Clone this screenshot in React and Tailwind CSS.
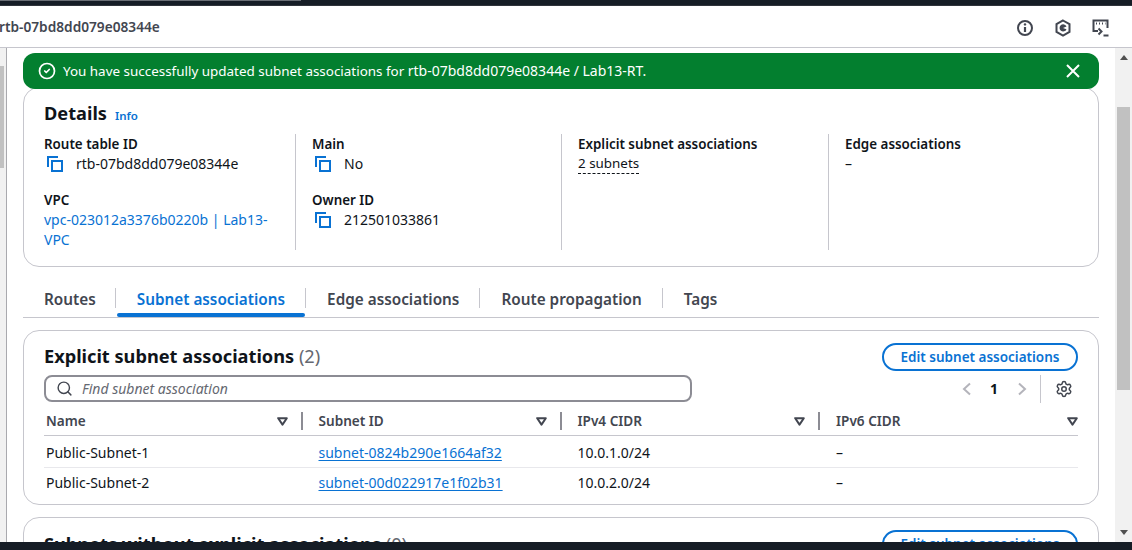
import React from 'react';
import { Search, Settings, CircleCheck } from 'lucide-react';

function CopyIcon() {
  return (
    <svg width="16" height="16" viewBox="0 0 16 16" fill="none" stroke="#0972d3" strokeWidth="2" className="shrink-0">
      <rect x="5" y="5" width="10" height="10" />
      <path d="M1 11V1h10" />
    </svg>
  );
}

function SortIcon() {
  return (
    <svg width="11" height="9" viewBox="0 0 11 9" fill="none" stroke="#424650" strokeWidth="2" strokeLinejoin="round" className="shrink-0">
      <path d="M1.2 1.2h8.6L5.5 7.6z" />
    </svg>
  );
}

function Chevron({ right }) {
  return (
    <svg width="10" height="14" viewBox="0 0 10 14" fill="none" stroke="#b4b4bb" strokeWidth="2" className="shrink-0">
      <path d={right ? 'M2 1.5L8 7l-6 5.5' : 'M8 1.5L2 7l6 5.5'} />
    </svg>
  );
}

function Label({ children }) {
  return <div className="text-[13.4px] font-semibold leading-5 text-[#0f141a]">{children}</div>;
}

function Copyable({ children }) {
  return (
    <div className="flex h-5 items-center gap-[13px] pl-[3px] text-sm text-[#0f141a]">
      <CopyIcon />
      <span>{children}</span>
    </div>
  );
}

function Details() {
  return (
    <section className="-mt-[2px] h-[180px] shrink-0 rounded-[16px] border border-[#c6c6cd] bg-white">
      <div className="flex h-[46px] items-baseline gap-2 pl-[20px] pt-[13px]">
        <h2 className="text-[18.2px] font-bold leading-6 text-[#0f141a]">Details</h2>
        <span className="text-[11.5px] font-semibold text-[#0972d3]">Info</span>
      </div>
      <div className="flex pl-[20px]">
        <div className="h-[116px] w-[252px] border-r border-[#c6c6cd]">
          <Label>Route table ID</Label>
          <Copyable>rtb-07bd8dd079e08344e</Copyable>
          <div className="mt-[16px]"><Label>VPC</Label></div>
          <div className="w-[240px] text-sm leading-5 text-[#0972d3]">vpc-023012a3376b0220b | Lab13-VPC</div>
        </div>
        <div className="h-[116px] w-[266px] border-r border-[#c6c6cd] pl-[16px]">
          <Label>Main</Label>
          <Copyable>No</Copyable>
          <div className="mt-[16px]"><Label>Owner ID</Label></div>
          <Copyable>212501033861</Copyable>
        </div>
        <div className="h-[116px] w-[267px] border-r border-[#c6c6cd] pl-[16px]">
          <Label>Explicit subnet associations</Label>
          <div className="w-fit border-b border-dashed border-[#0f141a] text-[13.4px] leading-[19px] text-[#0f141a]">2 subnets</div>
        </div>
        <div className="pl-[16px]">
          <Label>Edge associations</Label>
          <div className="text-sm leading-5 text-[#0f141a]">–</div>
        </div>
      </div>
    </section>
  );
}

function Tabs() {
  const tabs = ['Routes', 'Subnet associations', 'Edge associations', 'Route propagation', 'Tags'];
  return (
    <div className="mt-[18px] flex h-[33px] shrink-0 border-b border-[#c6c6cd]">
      {tabs.map((t, i) => (
        <div key={t} className={`relative flex h-[32px] items-start ${i === 0 ? 'pl-[21px] pr-[20px]' : 'px-[21px]'}`}>
          <span className={`text-[15.3px] font-semibold leading-[28px] ${i === 1 ? 'text-[#0972d3]' : 'text-[#424650]'}`}>{t}</span>
          {i < 4 && <span className="absolute right-0 top-[3px] h-5 w-px bg-[#c6c6cd]" />}
          {i === 1 && <span className="absolute inset-x-[1px] bottom-0 h-1 rounded-sm bg-[#0972d3]" />}
        </div>
      ))}
    </div>
  );
}

function TableHead({ label, first, last }) {
  return (
    <div className="flex h-[26px] w-full items-center justify-between">
      <span className={`text-[13.6px] font-semibold text-[#424650] ${first ? 'pl-[2px]' : ''}`}>{label}</span>
      <div className="flex items-center gap-[13px]">
        <SortIcon />
        {!last && <span className="h-[18px] w-[2px] bg-[#8c8c94]" />}
      </div>
    </div>
  );
}

function Row({ name, subnet, cidr, border }) {
  return (
    <div className={`flex h-[31px] items-center text-sm text-[#0f141a] ${border ? 'border-t border-[#e8e8ec]' : 'pt-[2px]'}`}>
      <div className="w-[258.5px] pl-[2px]">{name}</div>
      <div className="w-[259px] pl-[16px]"><a className="text-[#0972d3] underline underline-offset-2">{subnet}</a></div>
      <div className="w-[258.5px] pl-[16px]">{cidr}</div>
      <div className="pl-[16px]">–</div>
    </div>
  );
}

function Associations() {
  return (
    <section className="mt-[12px] h-[175px] shrink-0 rounded-[16px] border border-[#c6c6cd] bg-white px-[20px]">
      <div className="flex h-[42px] items-center justify-between pt-[10px]">
        <h2 className="-mt-[2px] text-[18.2px] font-bold leading-6 text-[#0f141a]">
          Explicit subnet associations <span className="font-normal text-[#656871]">(2)</span>
        </h2>
        <button className="h-[28px] w-[196px] rounded-full border-2 border-[#0972d3] text-[13.5px] font-semibold leading-4 text-[#0972d3]">
          Edit subnet associations
        </button>
      </div>
      <div className="mt-px flex h-[29px] items-center justify-between">
        <div className="flex h-[27px] w-[648px] items-center gap-[9px] rounded-lg border-2 border-[#8c8c94] pl-[10px]">
          <Search size={17} color="#424650" strokeWidth={2} />
          <span className="text-sm italic text-[#656871]">Find subnet association</span>
        </div>
        <div className="flex items-center pr-[5px]">
          <Chevron />
          <span className="ml-[18px] mr-[19px] w-2 text-sm font-bold text-[#0f141a]">1</span>
          <Chevron right />
          <span className="ml-[13px] mr-[14px] h-[28px] w-px bg-[#c6c6cd]" />
          <Settings size={18} color="#424650" strokeWidth={2} />
        </div>
      </div>
      <div className="mt-[5px] flex w-[1034px] border-b border-[#c6c6cd] pb-[1px]">
        <div className="w-[258.5px]"><TableHead label="Name" first /></div>
        <div className="w-[259px] pl-[16px]"><TableHead label="Subnet ID" /></div>
        <div className="w-[258.5px] pl-[16px]"><TableHead label="IPv4 CIDR" /></div>
        <div className="w-[258px] pl-[16px]"><TableHead label="IPv6 CIDR" last /></div>
      </div>
      <Row name="Public-Subnet-1" subnet="subnet-0824b290e1664af32" cidr="10.0.1.0/24" />
      <Row name="Public-Subnet-2" subnet="subnet-00d022917e1f02b31" cidr="10.0.2.0/24" border />
    </section>
  );
}

function Withouts() {
  return (
    <section className="mt-[12px] h-[60px] shrink-0 rounded-[16px] border border-[#c6c6cd] bg-white px-[20px]">
      <div className="flex h-[42px] items-center justify-between pt-[10px]">
        <h2 className="text-[18.2px] font-bold leading-6 text-[#0f141a]">
          Subnets without explicit associations <span className="font-normal text-[#656871]">(0)</span>
        </h2>
        <button className="h-[28px] w-[196px] rounded-full border-2 border-[#0972d3] text-[13.5px] font-semibold leading-4 text-[#0972d3]">
          Edit subnet associations
        </button>
      </div>
    </section>
  );
}

export default function App() {
  return (
    <div className="flex h-[550px] w-[1132px] flex-col overflow-hidden bg-white font-['Noto_Sans',sans-serif]">
      <div className="h-[6px] shrink-0 border-b border-[#30343b] bg-[#161d26]">
        <div className="h-px w-[301px] bg-[#6b6f76]" />
      </div>
      <header className="flex h-[42px] shrink-0 items-center justify-between border-b border-[#c6c6cd] bg-white pr-[22px]">
        <span className="-ml-[1px] pt-[2px] text-[13.7px] font-semibold text-[#424650]">rtb-07bd8dd079e08344e</span>
        <div className="flex items-center gap-[20px] pt-[2px]">
          <svg width="18" height="18" viewBox="0 0 18 18" fill="none" stroke="#424650" strokeWidth="2">
            <circle cx="9" cy="9" r="7" />
            <path d="M9 8v5" strokeWidth="2.2" />
            <circle cx="9" cy="5.4" r="1.2" fill="#424650" stroke="none" />
          </svg>
          <svg width="18" height="18" viewBox="0 0 18 18" fill="none" stroke="#424650" strokeWidth="2">
            <path d="M9 1.5l6.5 3.7v7.6L9 16.5l-6.5-3.7V5.2z" />
            <path d="M12.5 10.2A3.6 3.6 0 1 1 12.5 7.6L9 9z" fill="#424650" stroke="none" />
          </svg>
          <svg width="18" height="18" viewBox="0 0 18 18" fill="none" stroke="#424650" strokeWidth="2">
            <path d="M6 12H1.5V1.5h14V9" />
            <path d="M4 4.5h1M7 4.5h1M10 4.5h1M13 4.5h0.5" />
            <path d="M6.5 9.5l3 3-3 3M11.5 16.5h5" />
          </svg>
        </div>
      </header>
      <div className="flex min-h-0 flex-1">
        <div className="w-[7px] shrink-0 border-r border-[#a9a9ae] bg-[#f1f1f1]">
          <div className="mt-[18px] h-[102px] w-[4px] bg-[#c1c1c1]" />
        </div>
        <main className="flex min-w-0 flex-1 flex-col overflow-hidden px-[16px] pt-[5px]">
          <div className="relative z-10 flex h-[36px] shrink-0 items-center justify-between rounded-[12px] bg-[#037f2f] pl-[15px] pr-[19px] text-white">
            <div className="flex items-center gap-[7px]">
              <CircleCheck size={18} strokeWidth={2.3} />
              <span className="text-sm">
                <span className="text-[13.43px]">You have successfully updated subnet associations for </span>
                rtb-07bd8dd079e08344e / Lab13-RT.
              </span>
            </div>
            <svg width="14" height="14" viewBox="0 0 14 14" fill="none" stroke="#fff" strokeWidth="2">
              <path d="M1 1l12 12M13 1L1 13" />
            </svg>
          </div>
          <Details />
          <Tabs />
          <Associations />
          <Withouts />
        </main>
        <div className="flex w-[17px] shrink-0 flex-col items-center bg-[#f1f1f1]">
          <div className="mt-[7px] h-0 w-0 border-x-[4px] border-b-[5px] border-x-transparent border-b-[#505050]" />
          <div className="mt-[47px] h-[283px] w-[13px] bg-[#c1c1c1]" />
          <div className="mb-[7px] mt-auto h-0 w-0 border-x-[4px] border-t-[5px] border-x-transparent border-t-[#505050]" />
        </div>
      </div>
      <div className="h-[8px] shrink-0 bg-[#161d26]" />
    </div>
  );
}
